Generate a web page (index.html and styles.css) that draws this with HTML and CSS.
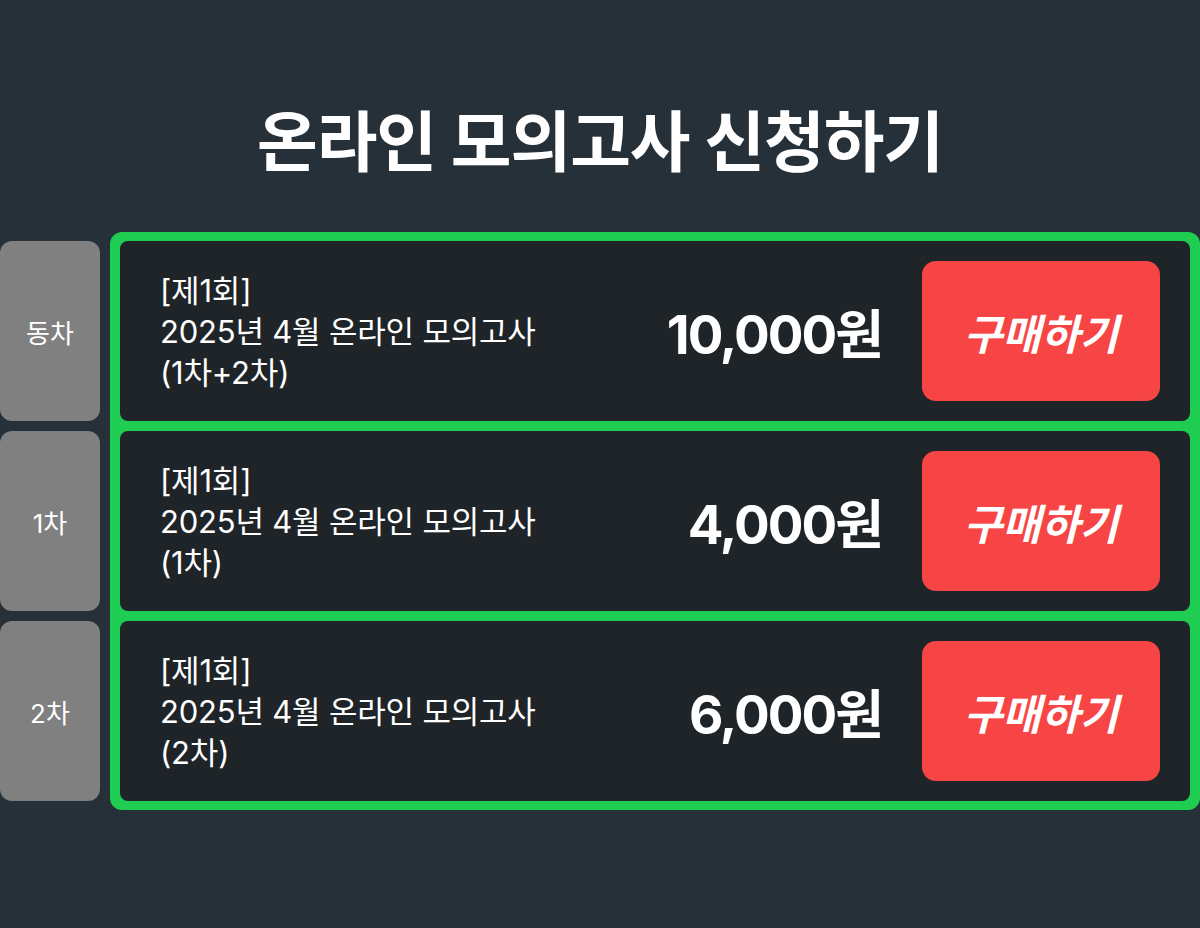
FILE: index.html
```html
<!DOCTYPE html>
<html lang="ko">
<head>
  <meta charset="UTF-8">
  <title>온라인 모의고사 신청하기</title>
  <link rel="stylesheet" href="styles.css">
</head>
<body>

  <h1 class="title">온라인 모의고사 신청하기</h1>

  <div class="board">
    <div class="labels">
      <div class="label">동차</div>
      <div class="label">1차</div>
      <div class="label">2차</div>
    </div>

    <div class="list">
      <div class="item">
        <div class="item-name">
          [제1회]<br>
          2025년 4월 온라인 모의고사<br>
          (1차+2차)
        </div>
        <div class="price">10,000원</div>
        <button class="buy">구매하기</button>
      </div>

      <div class="item">
        <div class="item-name">
          [제1회]<br>
          2025년 4월 온라인 모의고사<br>
          (1차)
        </div>
        <div class="price">4,000원</div>
        <button class="buy">구매하기</button>
      </div>

      <div class="item">
        <div class="item-name">
          [제1회]<br>
          2025년 4월 온라인 모의고사<br>
          (2차)
        </div>
        <div class="price">6,000원</div>
        <button class="buy">구매하기</button>
      </div>
    </div>
  </div>

</body>
</html>
```

FILE: styles.css
```css
body {
  font-family: Inter, "Noto Sans CJK KR", sans-serif;
  background-color: #263038;
  color: #fff;
  margin: 0;
}

.title {
  margin: 0;
  padding-top: 96px;
  height: 136px;
  font-size: 66px;
  line-height: 92px;
  font-weight: 700;
  text-align: center;
  letter-spacing: -1px;
}

.board {
  display: flex;
  gap: 10px;
}

.labels {
  width: 100px;
  padding-top: 9px;
  display: flex;
  flex-direction: column;
  gap: 10px;
}

.label {
  height: 180px;
  background: #808080;
  border-radius: 12px;
  display: flex;
  align-items: center;
  justify-content: center;
  font-size: 26px;
}

.list {
  flex: 1;
  background: #1ecd52;
  border-radius: 12px;
  padding: 9px 10px;
  display: flex;
  flex-direction: column;
  gap: 10px;
}

.item {
  height: 180px;
  box-sizing: border-box;
  background: #1e2428;
  border-radius: 8px;
  padding: 20px 30px 20px 40px;
  display: flex;
  align-items: center;
}

.item-name {
  flex: 1;
  font-size: 31px;
  line-height: 41px;
  letter-spacing: -0.2px;
}

.price {
  margin-right: 40px;
  font-size: 53px;
  font-weight: 700;
  letter-spacing: -2px;
}

.buy {
  width: 238px;
  height: 140px;
  border: none;
  border-radius: 14px;
  background: #f74545;
  color: #fff;
  font-family: inherit;
  font-size: 42px;
  font-weight: 700;
  font-style: italic;
  cursor: pointer;
}
```
